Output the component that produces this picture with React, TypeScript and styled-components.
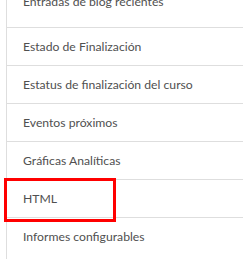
import React from 'react';
import styled, { createGlobalStyle } from 'styled-components';

const GlobalStyle = createGlobalStyle`
  html, body {
    margin: 0;
    padding: 0;
    background: #fff;
    overflow: hidden;
  }
`;

const Viewport = styled.div`
  width: 243px;
  height: 261px;
  overflow: hidden;
  position: relative;
  background: #fff;
`;

const BlockList = styled.ul`
  list-style: none;
  margin: -24px 0 0 6px;
  padding: 0 0 4px 0;
  border-left: 1px solid #dedede;
`;

const BlockItem = styled.li<{ $first?: boolean; $last?: boolean }>`
  height: ${(p) => (p.$first ? '51px' : '37px')};
  display: flex;
  align-items: center;
  padding-left: 16px;
  border-bottom: ${(p) => (p.$last ? 'none' : '1px solid #dedede')};
  font-family: Lato, "Noto Sans", sans-serif;
  font-size: 12.2px;
  color: #505050;
  white-space: nowrap;
`;

const Highlight = styled.div`
  position: absolute;
  left: 4px;
  top: 178px;
  width: 106px;
  height: 38px;
  border: 3px solid #f00;
  pointer-events: none;
`;

const blocks = [
  'Entradas de blog recientes',
  'Estado de Finalización',
  'Estatus de finalización del curso',
  'Eventos próximos',
  'Gráficas Analíticas',
  'HTML',
  'Informes configurables',
];

const App: React.FC = () => {
  return (
    <Viewport>
      <GlobalStyle />
      <BlockList>
        {blocks.map((name, i) => (
          <BlockItem key={name} $first={i === 0} $last={i === blocks.length - 1}>
            {name}
          </BlockItem>
        ))}
      </BlockList>
      <Highlight />
    </Viewport>
  );
};

export default App;
